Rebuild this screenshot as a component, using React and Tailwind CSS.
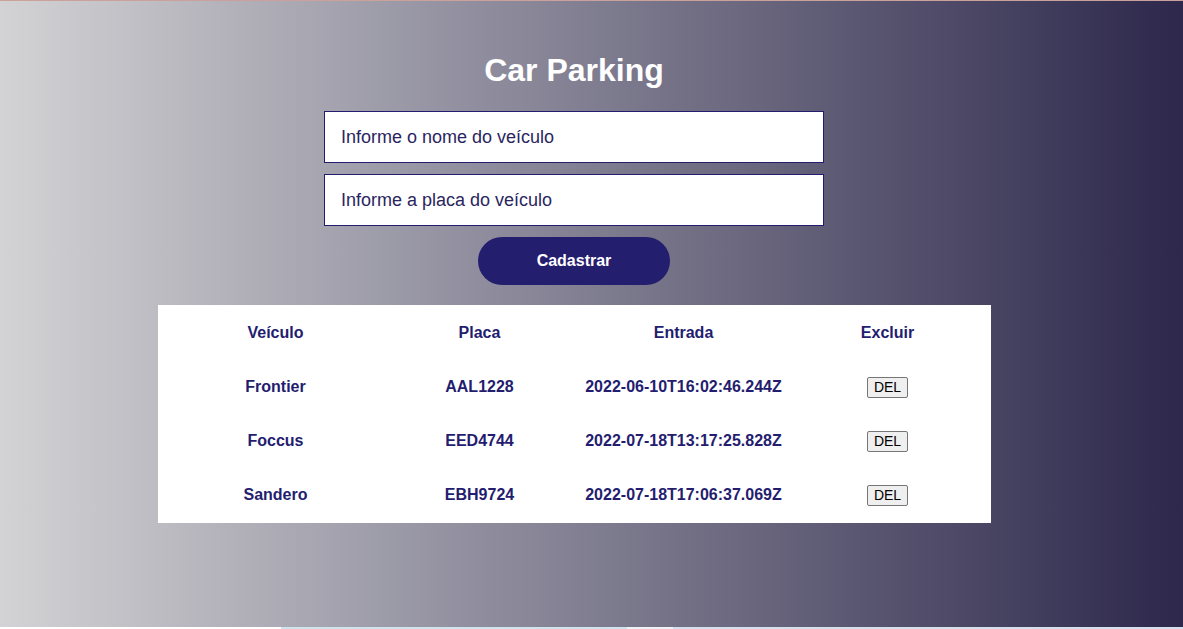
import React from "react";

const rows = [
  { nome: "Frontier", placa: "AAL1228", entrada: "2022-06-10T16:02:46.244Z" },
  { nome: "Foccus", placa: "EED4744", entrada: "2022-07-18T13:17:25.828Z" },
  { nome: "Sandero", placa: "EBH9724", entrada: "2022-07-18T17:06:37.069Z" },
];

export default function App() {
  return (
    <div className="w-[1183px] h-[629px] overflow-hidden flex flex-col" style={{ fontFamily: '"Liberation Sans", Arial, sans-serif' }}>
      <div className="h-[1px] bg-[#c9a39b]" />
      <div className="h-[626px] bg-[linear-gradient(to_right,#d3d3d5,#2d284c)]">
        <div className="w-[1148px] flex flex-col items-center">
          <h1 className="mt-[51px] h-[37px] text-[32px] leading-[37px] font-bold text-white">Car Parking</h1>
          <div className="mt-[22px] flex flex-col gap-[11px]">
            <input
              className="w-[500px] h-[52px] bg-white border border-[#241d6f] pl-4 text-[18px] text-[#2a2560] placeholder:text-[#2a2560] outline-none"
              placeholder="Informe o nome do veículo"
            />
            <input
              className="w-[500px] h-[52px] bg-white border border-[#241d6f] pl-4 text-[18px] text-[#2a2560] placeholder:text-[#2a2560] outline-none"
              placeholder="Informe a placa do veículo"
            />
          </div>
          <button className="mt-[11px] w-[192px] h-[48px] rounded-full bg-[#241e6e] text-white font-bold text-[16px]">
            Cadastrar
          </button>
          <div className="mt-[20px] w-[833px] h-[218px] bg-white pt-[1px] text-[16px] font-bold text-[#241d6f]">
            <div className="grid grid-cols-[236px_172px_236px_172px] h-[54px] items-center text-center">
              <div>Veículo</div>
              <div>Placa</div>
              <div>Entrada</div>
              <div>Excluir</div>
            </div>
            {rows.map((r) => (
              <div key={r.placa} className="grid grid-cols-[236px_172px_236px_172px] h-[54px] items-center text-center">
                <div>{r.nome}</div>
                <div>{r.placa}</div>
                <div>{r.entrada}</div>
                <div className="flex justify-center">
                  <button className="w-[41px] h-[21px] bg-[#efefef] border border-[#767676] rounded-[2px] text-[14px] font-normal text-black leading-none">
                    DEL
                  </button>
                </div>
              </div>
            ))}
          </div>
        </div>
      </div>
      <div className="h-[2px] flex">
        <div className="w-[281px] bg-white" />
        <div className="w-[346px] bg-[#d0e4ee]" />
        <div className="w-[46px] bg-[#eef3f6]" />
        <div className="flex-1 bg-[#d4e0ec]" />
      </div>
    </div>
  );
}
